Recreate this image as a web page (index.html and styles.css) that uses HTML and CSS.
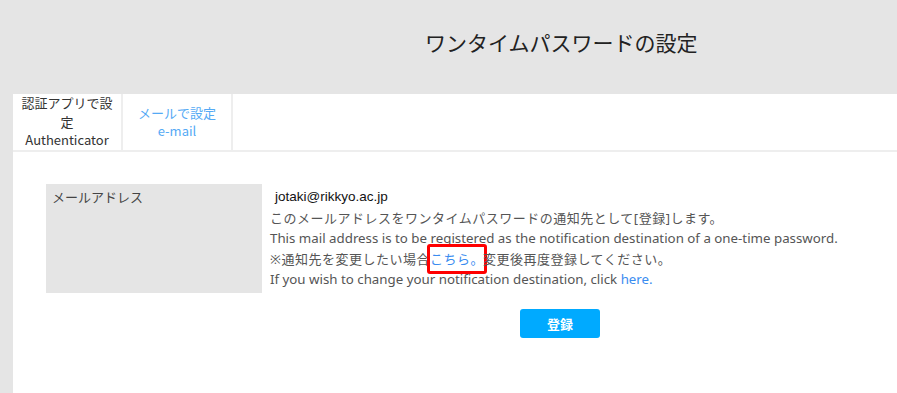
FILE: index.html
```html
<!DOCTYPE html>
<html>

<head>
    <title>ワンタイムパスワードの設定</title>
    <link rel="stylesheet" href="styles.css">
</head>

<body>
    <div id="header">
        <h1 id="pageTitle">ワンタイムパスワードの設定</h1>
    </div>

    <div id="main">
        <div class="tabs">
            <div class="tab">
                <span>認証アプリで設定</span>
                <span>Authenticator</span>
            </div>
            <a class="tab tab-link" href="#">
                <span>メールで設定</span>
                <span>e-mail</span>
            </a>
        </div>

        <div class="formRow">
            <div class="formLabel">メールアドレス</div>
            <div class="formData">
                <p class="mailAddress">jotaki@rikkyo.ac.jp</p>
                <p class="ja">このメールアドレスをワンタイムパスワードの通知先として[登録]します。</p>
                <p>This mail address is to be registered as the notification destination of a one-time password.</p>
                <p class="ja">※通知先を変更したい場合<a class="marked" href="#">こちら。</a>変更後再度登録してください。</p>
                <p>If you wish to change your notification destination, click <a href="#">here.</a></p>
            </div>
        </div>

        <div class="buttonRow">
            <input id="registerButton" type="button" value="登録" />
        </div>
    </div>
</body>

</html>
```

FILE: styles.css
```css
html,
body {
    height: 100%;
}

body {
    margin: 0;
    background-color: #e5e5e5;
    font-family: "Noto Sans", "Noto Sans CJK JP", sans-serif;
    font-size: 13px;
    color: #555;
}

a {
    color: #3a8cf0;
    text-decoration: none;
}

#header {
    height: 94px;
    padding-left: 425px;
    box-sizing: border-box;
}

#pageTitle {
    margin: 0;
    padding-top: 27px;
    font-size: 21px;
    font-weight: normal;
    color: #222;
    font-family: "Noto Sans CJK JP", sans-serif;
}

#main {
    margin-left: 13px;
    background-color: white;
    height: calc(100% - 94px);
}

.tabs {
    display: flex;
    height: 56px;
    border-bottom: 2px solid #eee;
}

.tab {
    width: 110px;
    padding: 0 7px;
    box-sizing: border-box;
    border-right: 2px solid #eee;
    display: flex;
    flex-direction: column;
    justify-content: center;
    text-align: center;
    line-height: 18.5px;
    color: #333;
    font-family: "Noto Sans CJK JP", sans-serif;
}

.tab-link {
    width: 110px;
    color: #55aaf5;
}

.formRow {
    display: flex;
    margin: 32px 0 0 33px;
}

.formLabel {
    width: 216px;
    height: 109px;
    padding: 3px 6px;
    box-sizing: border-box;
    background-color: #e5e5e5;
    line-height: 20px;
    color: #444;
    font-family: "Noto Sans CJK JP", sans-serif;
}

.formData {
    padding: 3px 0 0 8px;
}

.formData p {
    margin: 0;
    line-height: 20.5px;
    white-space: nowrap;
    font-size: 13.3px;
}

.formData p.ja {
    font-size: 13px;
    letter-spacing: 0.5px;
}

.mailAddress {
    padding-left: 5px;
    color: #111;
    font-family: "Liberation Sans", sans-serif;
}

.formData p.mailAddress {
    font-size: 13.5px;
}

a.marked {
    padding: 3px 0;
    margin: 0 -4px 0 -3px;
    border: 3px solid #f00;
    border-radius: 3px;
}

.buttonRow {
    padding: 16px 0 0 507px;
}

#registerButton {
    width: 80px;
    height: 29px;
    border: 0;
    border-radius: 3px;
    background-color: #00aaff;
    color: white;
    font-weight: bold;
    font-size: 13px;
    font-family: "Noto Sans CJK JP", sans-serif;
}
```
